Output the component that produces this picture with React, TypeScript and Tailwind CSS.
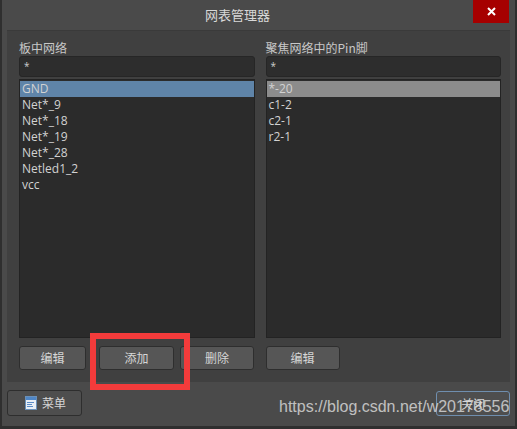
import { useState } from 'react';

const nets = ['GND', 'Net*_9', 'Net*_18', 'Net*_19', 'Net*_28', 'Netled1_2', 'vcc'];
const pins = ['*-20', 'c1-2', 'c2-1', 'r2-1'];

const cjk = { fontFamily: '"Noto Sans CJK SC", "Open Sans", sans-serif' };
const latin = { fontFamily: '"Open Sans", "Noto Sans CJK SC", sans-serif' };

function MenuIcon() {
  return (
    <svg width="12" height="14" viewBox="0 0 12 14">
      <rect x="0.5" y="0.5" width="11" height="13" fill="#e8eef5" stroke="#6a90b8" />
      <rect x="1" y="1" width="10" height="3" fill="#4f86c6" />
      <rect x="2" y="6" width="7" height="1" fill="#5a8cc8" />
      <rect x="2" y="8" width="5" height="1" fill="#5a8cc8" />
      <rect x="2" y="10" width="6" height="1" fill="#5a8cc8" />
    </svg>
  );
}

function Btn({ label, className = '' }: { label: string; className?: string }) {
  return (
    <button
      className={`h-[24px] rounded-[3px] border border-[#2e2e2e] bg-[#565656] text-[12px] text-[#d6d6d6] ${className}`}
      style={cjk}
    >
      {label}
    </button>
  );
}

function ListColumn({
  title,
  items,
  selectedColor,
  selected,
  onSelect,
}: {
  title: string;
  items: string[];
  selectedColor: string;
  selected: number;
  onSelect: (i: number) => void;
}) {
  return (
    <div className="flex flex-col">
      <div className="h-[14px] text-[12px] leading-[14px] text-[#c8c8c8]" style={cjk}>
        {title}
      </div>
      <div className="mt-[1px] flex h-[21px] items-start rounded-[3px] border border-[#262626] bg-[#2d2d2d] px-[4px] pt-[2px] text-[10px] text-[#cfcfcf]" style={latin}>
        *
      </div>
      <div className="mt-[2px] h-[259px] border border-[#232323] bg-[#2b2b2b] pt-[1px]">
        {items.map((it, i) => (
          <div
            key={it}
            onClick={() => onSelect(i)}
            className={`h-[16px] px-[2px] text-[12px] leading-[16px] text-[#d2d2d2] ${i === selected ? selectedColor : ''}`}
            style={latin}
          >
            {it}
          </div>
        ))}
      </div>
    </div>
  );
}

export default function App() {
  const [net, setNet] = useState(0);
  const [pin, setPin] = useState(0);

  return (
    <div className="relative flex h-[429px] w-[517px] flex-col border-x-2 border-b-[3px] border-[#2f2f2f] bg-[#4a4a4a]">
      {/* Title bar */}
      <div className="relative flex h-[30px] items-center justify-center">
        <span className="-ml-[42px] text-[13px] text-[#d8d8d8]" style={cjk}>
          网表管理器
        </span>
        <div className="absolute right-[6px] top-0 flex h-[23px] w-[36px] items-center justify-center bg-[#a60000]">
          <svg width="9" height="9" viewBox="0 0 9 9">
            <path d="M1 1L8 8M8 1L1 8" stroke="#ffffff" strokeWidth="2" />
          </svg>
        </div>
      </div>

      {/* Main panel */}
      <div className="mx-[5px] flex h-[352px] flex-col border-t border-[#3a3a3a] bg-[#404040] pl-[12px] pr-[9px] pt-[10px]">
        <div className="grid grid-cols-2 gap-[11px]">
          <ListColumn title="板中网络" items={nets} selectedColor="bg-[#5f84a8]" selected={net} onSelect={setNet} />
          <ListColumn title="聚焦网络中的Pin脚" items={pins} selectedColor="bg-[#8c8c8c]" selected={pin} onSelect={setPin} />
        </div>
        <div className="mt-[8px] grid grid-cols-2 gap-[11px]">
          <div className="flex gap-[6px]">
            <Btn label="编辑" className="w-[67px]" />
            <Btn label="添加" className="ml-[7px] w-[75px]" />
            <Btn label="删除" className="w-[74px]" />
          </div>
          <div className="flex">
            <Btn label="编辑" className="w-[74px]" />
          </div>
        </div>
      </div>

      {/* Bottom row */}
      <div className="mt-[8px] flex justify-between px-[5px]">
        <button
          className="flex h-[26px] w-[75px] items-center gap-[5px] rounded-[3px] border border-[#2e2e2e] bg-[#4e4e4e] pl-[17px] text-[12px] text-[#d6d6d6]"
          style={cjk}
        >
          <MenuIcon />
          菜单
        </button>
        <button
          className="mt-[1px] h-[25px] w-[74px] rounded-[3px] border border-[#6f8eae] bg-[#4e4e4e] text-[12px] text-[#d6d6d6]"
          style={cjk}
        >
          关闭
        </button>
      </div>

      {/* Annotation overlay */}
      <div className="absolute left-[88px] top-[333px] h-[57px] w-[100px] border-[6px] border-[#f33b3b]" />

      {/* Watermark */}
      <div
        className="absolute left-[277px] top-[397px] text-[16px] leading-[20px] text-[#e0e0e0]/80"
        style={{ fontFamily: '"Liberation Sans", Arial, sans-serif' }}
      >
        https://blog.csdn.net/w20178556
      </div>
    </div>
  );
}
